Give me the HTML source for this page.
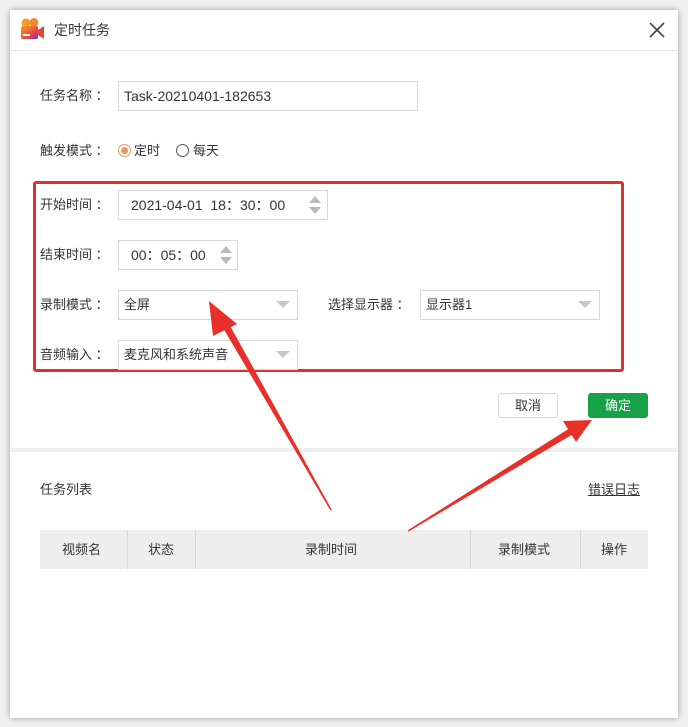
<!DOCTYPE html>
<html><head><meta charset="utf-8"><style>
*{margin:0;padding:0;box-sizing:border-box}
body{width:688px;height:727px;background:#f0f0f0;font-family:"Liberation Sans","Noto Sans CJK SC",sans-serif;font-size:13px;color:#333;position:relative;overflow:hidden}
.win{position:absolute;left:10px;top:10px;width:668px;height:708px;background:#fff;box-shadow:0 0 6px rgba(0,0,0,.35)}
.a{position:absolute}
.lbl{position:absolute;font-size:13px;color:#333;line-height:16px}
.box{position:absolute;border:1px solid #d9d9d9;background:#fff;font-size:13px;color:#333;line-height:28px;padding:0 5px}
.tri{position:absolute;width:0;height:0;border-left:7px solid transparent;border-right:7px solid transparent;border-top:7px solid #c8c8c8}
.sp{position:absolute;width:0;height:0;border-left:6px solid transparent;border-right:6px solid transparent}
</style></head><body>
<div class="win"></div>
<svg class="a" style="left:20px;top:17px" width="25" height="25" viewBox="0 0 25 25">
<defs><linearGradient id="g" x1="0" y1="0" x2="1" y2="1"><stop offset="0" stop-color="#f5a623"/><stop offset=".6" stop-color="#e8493b"/><stop offset="1" stop-color="#8b2fc9"/></linearGradient></defs>
<circle cx="6" cy="6" r="4.5" fill="#f29a2e"/><circle cx="14" cy="5.5" r="4.5" fill="#f08a2e"/>
<rect x="1" y="9" width="17" height="13" rx="2" fill="url(#g)"/><path d="M18 13l6-4v13l-6-4z" fill="#e0463a"/><rect x="3" y="17" width="7" height="2" fill="#fff"/></svg>
<div class="lbl" style="left:54px;top:22px;font-size:14px">定时任务</div>
<svg class="a" style="left:649px;top:22px" width="16" height="16"><path d="M1 1L15 15M15 1L1 15" stroke="#444" stroke-width="1.6"/></svg>
<div class="a" style="left:10px;top:50px;width:668px;height:1px;background:#e8e8e8"></div>

<div class="lbl" style="left:40px;top:88px">任务名称 ：</div>
<div class="box" style="left:118px;top:81px;width:300px;height:30px;font-size:14px">Task-20210401-182653</div>
<div class="lbl" style="left:40px;top:143px">触发模式 ：</div>
<div class="a" style="left:118px;top:144px;width:13px;height:13px;border:1px solid #e8956a;border-radius:50%"></div>
<div class="a" style="left:121px;top:147px;width:7px;height:7px;background:#e8956a;border-radius:50%"></div>
<div class="lbl" style="left:134px;top:143px">定时</div>
<div class="a" style="left:176px;top:144px;width:13px;height:13px;border:1px solid #555;border-radius:50%"></div>
<div class="lbl" style="left:193px;top:143px">每天</div>

<div class="a" style="left:33px;top:181px;width:591px;height:191px;border:3px solid #e0302a;border-radius:3px"></div>
<div class="lbl" style="left:40px;top:197px">开始时间 ：</div>
<div class="box" style="left:118px;top:190px;width:210px;height:30px;padding:0 12px;font-size:14px">2021-04-01&nbsp;&nbsp;18：30：00</div>
<div class="sp" style="left:309px;top:196px;border-bottom:7px solid #bbb"></div>
<div class="sp" style="left:309px;top:207px;border-top:7px solid #bbb"></div>
<div class="lbl" style="left:40px;top:247px">结束时间 ：</div>
<div class="box" style="left:118px;top:240px;width:120px;height:30px;padding:0 12px;font-size:14px">00：05：00</div>
<div class="sp" style="left:220px;top:246px;border-bottom:7px solid #bbb"></div>
<div class="sp" style="left:220px;top:257px;border-top:7px solid #bbb"></div>
<div class="lbl" style="left:40px;top:297px">录制模式 ：</div>
<div class="box" style="left:118px;top:290px;width:180px;height:30px">全屏</div>
<div class="tri" style="left:276px;top:301px"></div>
<div class="lbl" style="left:328px;top:297px">选择显示器 ：</div>
<div class="box" style="left:420px;top:290px;width:180px;height:30px">显示器1</div>
<div class="tri" style="left:578px;top:301px"></div>
<div class="lbl" style="left:40px;top:347px">音频输入 ：</div>
<div class="box" style="left:118px;top:340px;width:180px;height:30px">麦克风和系统声音</div>
<div class="tri" style="left:276px;top:351px"></div>

<div class="box" style="left:498px;top:393px;width:60px;height:25px;border-radius:3px;text-align:center;line-height:23px">取消</div>
<div class="a" style="left:588px;top:393px;width:60px;height:25px;border-radius:3px;background:#17a24a;color:#fff;text-align:center;line-height:25px;font-size:13px">确定</div>

<div class="a" style="left:10px;top:448px;width:668px;height:4px;background:#eeeeee"></div>
<div class="lbl" style="left:40px;top:482px">任务列表</div>
<div class="lbl" style="left:588px;top:482px;text-decoration:underline">错误日志</div>

<div class="a" style="left:40px;top:530px;width:608px;height:39px;background:#eeeeee"></div>
<div class="a" style="left:127px;top:530px;width:1px;height:39px;background:#d8d8d8"></div>
<div class="a" style="left:195px;top:530px;width:1px;height:39px;background:#d8d8d8"></div>
<div class="a" style="left:470px;top:530px;width:1px;height:39px;background:#d8d8d8"></div>
<div class="a" style="left:580px;top:530px;width:1px;height:39px;background:#d8d8d8"></div>
<div class="lbl" style="left:62px;top:542px">视频名</div>
<div class="lbl" style="left:148px;top:542px">状态</div>
<div class="lbl" style="left:305px;top:542px">录制时间</div>
<div class="lbl" style="left:498px;top:542px">录制模式</div>
<div class="lbl" style="left:601px;top:542px">操作</div>

<svg class="a" style="left:0;top:0" width="688" height="727">
<path d="M331 510L226 320L221 323Z" fill="#e8302a" stroke="#e8302a" stroke-width="1.5"/>
<path d="M209 301L237 324L213 336Z" fill="#e8302a"/>
<path d="M408 531L573 427L575 432Z" fill="#e8302a" stroke="#e8302a" stroke-width="1.5"/>
<path d="M592 420L563 421L576 442Z" fill="#e8302a"/>
</svg>
</body></html>
